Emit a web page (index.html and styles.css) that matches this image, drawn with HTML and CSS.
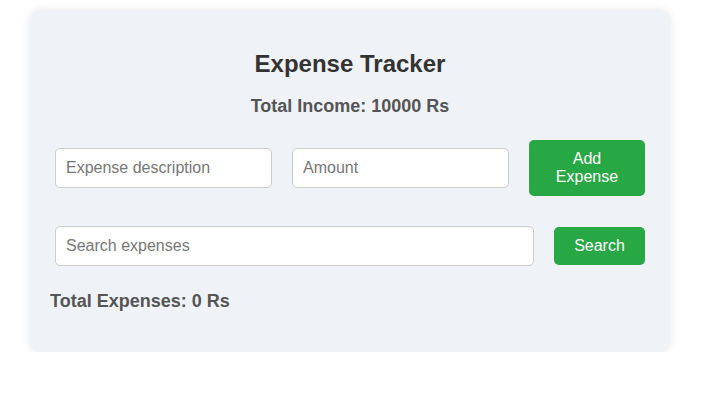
FILE: index.html
```html
<!DOCTYPE html>
<html>
<head>
<meta charset="utf-8">
<link rel="stylesheet" href="styles.css">
</head>
<body>
<div class="container">
  <h2 class="title">Expense Tracker</h2>
  <h3 class="income">Total Income: 10000 Rs</h3>
  <div class="row">
    <input class="field" type="text" placeholder="Expense description">
    <input class="field" type="text" placeholder="Amount">
    <button class="btn btn-add">Add Expense</button>
  </div>
  <div class="row">
    <input class="field" type="text" placeholder="Search expenses">
    <button class="btn btn-search">Search</button>
  </div>
  <h3 class="total">Total Expenses: 0 Rs</h3>
</div>
</body>
</html>
```
FILE: styles.css
```css
html, body {
  margin: 0;
  padding: 0;
  background: #ffffff;
  font-family: "Liberation Sans", Arial, sans-serif;
}
.container {
  width: 600px;
  margin: 10px 0 0 30px;
  padding: 20px;
  background: #eff2f7;
  border-radius: 10px;
  box-shadow: 0 0 10px rgba(0, 0, 0, 0.1);
}
.title {
  font-size: 24px;
  margin: 20px 0 18px;
  text-align: center;
  color: #333333;
}
.income {
  font-size: 18px;
  margin: 0 0 18px;
  text-align: center;
  color: #555555;
}
.row {
  display: flex;
  align-items: center;
  gap: 10px;
  margin-bottom: 20px;
}
.field {
  flex: 1;
  min-width: 0;
  margin: 5px;
  padding: 10px;
  font-size: 16px;
  font-family: "Liberation Sans", Arial, sans-serif;
  border: 1px solid #cccccc;
  border-radius: 5px;
  background: #ffffff;
  color: #333;
  box-sizing: border-box;
  height: 40px;
}
.field::placeholder {
  color: #777777;
}
.btn {
  margin: 5px;
  padding: 10px 20px;
  font-size: 16px;
  font-family: "Liberation Sans", Arial, sans-serif;
  background: #28a745;
  color: #ffffff;
  border: none;
  border-radius: 5px;
  line-height: 18px;
}
.btn-add {
  width: 116px;
  flex: none;
}
.btn-search {
  width: 91px;
  flex: none;
}
.total {
  font-size: 18px;
  margin: 19px 0 20px;
  color: #555555;
}
```
